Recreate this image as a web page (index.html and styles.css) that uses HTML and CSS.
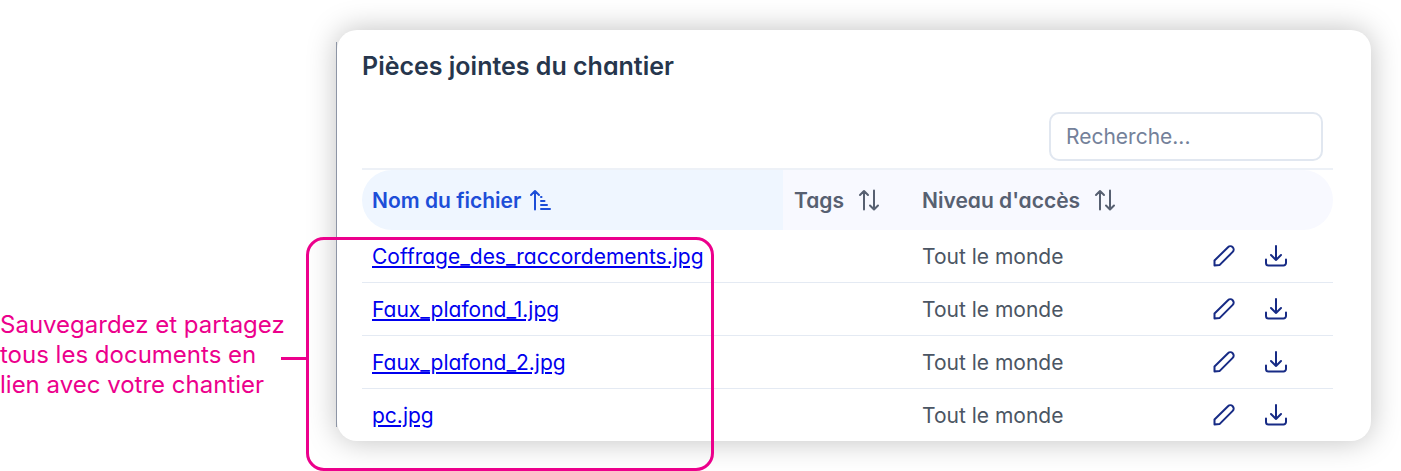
FILE: index.html
```
<!DOCTYPE html>
<html lang="fr">
  <head>
    <meta charset="utf-8">
    <title>Pièces jointes du chantier</title>
    <link rel="stylesheet" href="styles.css">
  </head>
  <body>
    <svg class="sprite" aria-hidden="true">
      <symbol id="icon-sort" viewBox="0 0 22 22">
        <path d="M6 20.500V2M2 6l4-4 4 4M16 1.500V20M12 16.500l4 4 4-4" />
      </symbol>
      <symbol id="icon-sort-asc" viewBox="0 0 22 22">
        <path d="M6 20.500V2M2 6l4-4 4 4M12 8h.5M12 12h3.500M12 16h6M12 20h9" />
      </symbol>
      <symbol id="icon-pencil" viewBox="0 0 22 22">
        <path d="M1.500 20.500v-5L15 2.200a3.200 3.200 0 0 1 4.700 4.700L6.500 20.100z" />
      </symbol>
      <symbol id="icon-download" viewBox="0 0 22 22">
        <path d="M11 1v14M6 10l5 5 5-5M1 14.500v3.500a2.500 2.500 0 0 0 2.500 2.500h15a2.500 2.500 0 0 0 2.500-2.500v-3.500" />
      </symbol>
    </svg>

    <div class="page">
      <aside class="callout">
        <p>Sauvegardez et partagez<br>tous les documents en<br>lien avec votre chantier</p>
      </aside>

      <main class="card">
        <h1>Pièces jointes du chantier</h1>
        <div class="toolbar">
          <input class="search" type="search" placeholder="Recherche..." aria-label="Recherche">
        </div>

        <table class="files">
          <colgroup>
            <col>
            <col class="col-tags">
            <col class="col-access">
            <col class="col-actions">
          </colgroup>
          <thead>
            <tr>
              <th class="sorted"><button class="sort">Nom du fichier <svg><use href="#icon-sort-asc" /></svg></button></th>
              <th><button class="sort">Tags <svg><use href="#icon-sort" /></svg></button></th>
              <th><button class="sort">Niveau d'accès <svg><use href="#icon-sort" /></svg></button></th>
              <th></th>
            </tr>
          </thead>
          <tbody>
            <tr>
              <td><a href="#">Coffrage_des_raccordements.jpg</a></td>
              <td></td>
              <td>Tout le monde</td>
              <td>
                <div class="actions">
                  <button aria-label="Modifier"><svg><use href="#icon-pencil" /></svg></button>
                  <button aria-label="Télécharger"><svg><use href="#icon-download" /></svg></button>
                </div>
              </td>
            </tr>
            <tr>
              <td><a href="#">Faux_plafond_1.jpg</a></td>
              <td></td>
              <td>Tout le monde</td>
              <td>
                <div class="actions">
                  <button aria-label="Modifier"><svg><use href="#icon-pencil" /></svg></button>
                  <button aria-label="Télécharger"><svg><use href="#icon-download" /></svg></button>
                </div>
              </td>
            </tr>
            <tr>
              <td><a href="#">Faux_plafond_2.jpg</a></td>
              <td></td>
              <td>Tout le monde</td>
              <td>
                <div class="actions">
                  <button aria-label="Modifier"><svg><use href="#icon-pencil" /></svg></button>
                  <button aria-label="Télécharger"><svg><use href="#icon-download" /></svg></button>
                </div>
              </td>
            </tr>
            <tr>
              <td><a href="#">pc.jpg</a></td>
              <td></td>
              <td>Tout le monde</td>
              <td>
                <div class="actions">
                  <button aria-label="Modifier"><svg><use href="#icon-pencil" /></svg></button>
                  <button aria-label="Télécharger"><svg><use href="#icon-download" /></svg></button>
                </div>
              </td>
            </tr>
          </tbody>
        </table>

        <!-- frame around the file names, tied to the callout -->
        <div class="highlight"></div>
      </main>
    </div>
  </body>
</html>
```
FILE: styles.css
```
* {
  box-sizing: border-box;
}
body {
  margin: 0;
  background: #fff;
  font-family: Inter, "Liberation Sans", sans-serif;
}
.sprite {
  display: none;
}
svg {
  width: 22px;
  height: 22px;
  fill: none;
  stroke: currentColor;
  stroke-width: 2px;
  stroke-linecap: round;
  stroke-linejoin: round;
}
button {
  padding: 0;
  border: none;
  background: none;
  font: inherit;
  color: inherit;
  cursor: pointer;
}
.page {
  display: flex;
  padding: 30px 30px 30px 0;
}
.callout {
  flex: 0 0 337px;
  padding-top: 280px;
  color: #ec008c;
  font-size: 24px;
  line-height: 30px;
}
.callout p {
  margin: 0;
}
.card {
  position: relative;
  flex: 1;
  padding: 20px 38px 0 25px;
  border-radius: 20px;
  background: #fff;
  box-shadow: 0 0 30px rgba(0, 0, 0, 0.25);
  color: #4b5563;
  font-size: 21px;
  font-feature-settings: "cv11";
}
/* thin dark edge on the left, between the rounded corners */
.card::before {
  content: "";
  position: absolute;
  top: 12px;
  bottom: 14px;
  left: -1px;
  width: 1px;
  background: #8d95a5;
}
h1 {
  margin: 0;
  color: #26364d;
  font-size: 25px;
  font-weight: 600;
  line-height: 32px;
}
.toolbar {
  display: flex;
  justify-content: flex-end;
  padding: 30px 10px 7px;
}
.search {
  width: 274px;
  height: 49px;
  padding: 0 15px;
  border: 2px solid #e1e7f0;
  border-radius: 10px;
  background: #fff;
  font: inherit;
}
.search::placeholder {
  color: #74819a;
}
.files {
  width: 100%;
  table-layout: fixed;
  border-spacing: 0;
  border-top: 2px solid #edf1f7;
}
.col-tags {
  width: 128px;
}
.col-access {
  width: 291px;
}
.col-actions {
  width: 131px;
}
th,
td {
  padding: 0 0 0 11px;
  text-align: left;
}
th:first-child,
td:first-child {
  padding-left: 10px;
}
th {
  height: 60px;
  background: #f8f9ff;
  color: #576071;
  font-weight: 600;
}
th:first-child {
  border-radius: 30px 0 0 30px;
}
th:last-child {
  border-radius: 0 30px 30px 0;
}
th.sorted {
  background: #eff6ff;
  color: #1d4ed8;
}
.sort {
  display: flex;
  align-items: center;
  gap: 14px;
}
.sorted .sort {
  gap: 8px;
}
td {
  height: 53px;
  border-bottom: 1px solid #e4eaf3;
}
tr:last-child td {
  height: 52px;
  border-bottom: none;
}
td a {
  color: #0000ee;
}
.actions {
  display: flex;
  gap: 30px;
  color: #172b85;
}
.actions button {
  display: flex;
}
.highlight {
  position: absolute;
  top: 207px;
  left: -31px;
  width: 408px;
  height: 234px;
  border: 3px solid #ec008c;
  border-radius: 18px;
  pointer-events: none;
}
.highlight::before {
  content: "";
  position: absolute;
  top: 117px;
  right: 100%;
  width: 28px;
  height: 3px;
  background: #ec008c;
}
```
